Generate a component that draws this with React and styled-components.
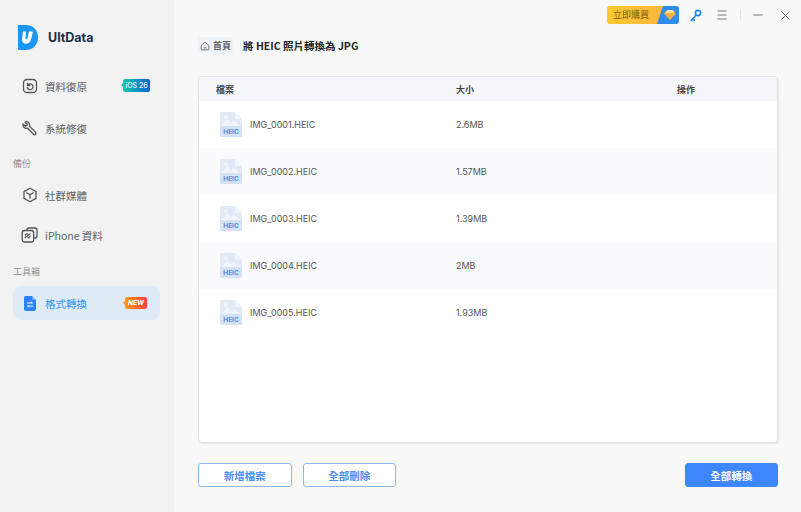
import React from "react";
import styled, { createGlobalStyle } from "styled-components";

const GlobalStyle = createGlobalStyle`
  html, body { margin: 0; padding: 0; background: #f8f8f8; }
  body { font-family: "Noto Sans CJK TC", "Noto Sans", sans-serif; }
`;

const Window = styled.div`
  width: 801px;
  height: 512px;
  display: flex;
  overflow: hidden;
`;

const Sidebar = styled.aside`
  width: 174px;
  flex: none;
  padding-top: 25px;
  box-sizing: border-box;
  background: #f2f2f2;
`;

const Brand = styled.div`
  height: 25px;
  margin: 0 0 19px 18px;
  display: flex;
  align-items: center;
  gap: 10px;
  font: 700 12.5px "Inter", sans-serif;
  color: #1f2d44;
`;

const NavItem = styled.div`
  position: relative;
  height: 34px;
  margin: 0 14px 0 13px;
  padding-left: 8px;
  display: flex;
  align-items: center;
  gap: 7px;
  border-radius: 8px;
  font-size: 10.5px;
  color: ${p => (p.$active ? "#2f95f5" : "#616161")};
  background: ${p => (p.$active ? "#deeaf6" : "transparent")};
  margin-bottom: ${p => p.$after || 0}px;
`;

const NavIcon = styled.span`
  width: 17px;
  height: 17px;
  display: flex;
  align-items: center;
  justify-content: center;
  flex: none;
`;

const SectionLabel = styled.div`
  margin: 0 0 7px 13px;
  height: 14px;
  line-height: 14px;
  font-size: 9px;
  color: #8f8f8f;
`;

const IosBadge = styled.span`
  position: absolute;
  left: 110px;
  top: 10px;
  width: 27px;
  height: 13px;
  border-radius: 2px;
  background: linear-gradient(90deg, #11c9a8, #0f62d8);
  color: #eaf6ff;
  font: 500 7px/13px "Inter", sans-serif;
  text-align: center;
  &::before {
    content: "";
    position: absolute;
    left: -2px;
    top: 4px;
    border: 2.5px solid transparent;
    border-left: 0;
    border-right: 2.5px solid #11c9a8;
  }
`;

const NewBadge = styled.span`
  position: absolute;
  left: 112px;
  top: 11px;
  width: 22px;
  height: 12px;
  border-radius: 2px;
  background: linear-gradient(90deg, #ff9a1f, #f8403e);
  color: #fff;
  font: italic 800 6.5px/12px "Inter", sans-serif;
  text-align: center;
  &::before {
    content: "";
    position: absolute;
    left: -2px;
    top: 3.5px;
    border: 2.5px solid transparent;
    border-left: 0;
    border-right: 2.5px solid #ff9a1f;
  }
`;

const Main = styled.main`
  flex: 1;
  display: flex;
  flex-direction: column;
  padding: 6px 23px 25px 24px;
  background: #f8f8f8;
  min-width: 0;
`;

const TopBar = styled.div`
  height: 18px;
  margin-right: -26px;
  display: flex;
  align-items: center;
  justify-content: flex-end;
`;

const BuyButton = styled.div`
  position: relative;
  width: 72px;
  height: 18px;
  margin-right: 9px;
  border-radius: 3px;
  overflow: hidden;
  background: linear-gradient(90deg, #fdc92f, #f8b040);
  color: #7a5a10;
  font-size: 9px;
  line-height: 18px;
  padding-left: 6px;
  box-sizing: border-box;
`;

const BuyTag = styled.span`
  position: absolute;
  right: 0;
  top: 0;
  width: 22px;
  height: 18px;
  background: #2f8df0;
  clip-path: polygon(6px 0, 100% 0, 100% 100%, 0 100%);
  display: flex;
  align-items: center;
  justify-content: center;
  padding-left: 3px;
  box-sizing: border-box;
`;

const WinIcons = styled.div`
  display: flex;
  align-items: center;
`;

const WinButton = styled.span`
  width: ${p => p.$w}px;
  display: flex;
  justify-content: center;
  align-items: center;
`;

const Divider = styled.span`
  width: 1px;
  height: 10px;
  background: #e3e3e3;
  margin-right: 9px;
`;

const Crumbs = styled.div`
  margin-top: 13px;
  height: 17px;
  display: flex;
  align-items: center;
`;

const HomeLink = styled.div`
  width: 35px;
  height: 17px;
  display: flex;
  align-items: center;
  justify-content: center;
  gap: 3px;
  background: #eef3fa;
  border-radius: 3px;
  font-size: 9px;
  font-weight: 700;
  color: #666;
`;

const Title = styled.h1`
  margin: 0 0 0 10px;
  font-size: 10.5px;
  font-weight: 700;
  color: #262626;
`;

const Table = styled.div`
  margin-top: 22px;
  flex: 1;
  min-height: 0;
  background: #fff;
  border: 1px solid #e2e3e6;
  border-radius: 4px;
  box-shadow: 1px 1px 1px #e6e6e6;
  overflow: hidden;
`;

const Row = styled.div`
  display: grid;
  grid-template-columns: 240px 221px 1fr;
  align-items: center;
  height: ${p => (p.$head ? 24 : 47)}px;
  padding-left: 17px;
  background: ${p => (p.$head ? "#f5f7fb" : p.$odd ? "#fafbfd" : "#fff")};
  font-size: 9px;
  font-weight: ${p => (p.$head ? 700 : 400)};
  color: ${p => (p.$head ? "#444" : "#555")};
`;

const NameCell = styled.div`
  display: flex;
  align-items: center;
  gap: 8px;
  margin-left: 4px;
  font-family: "Inter", sans-serif;
`;

const SizeCell = styled.div`
  font-family: "Inter", sans-serif;
`;

const Footer = styled.div`
  margin-top: 20px;
  display: flex;
  align-items: center;
  gap: 11px;
`;

const Button = styled.div`
  width: 93.5px;
  height: 24px;
  box-sizing: border-box;
  border-radius: 3px;
  display: flex;
  align-items: center;
  justify-content: center;
  font-size: 10.5px;
  font-weight: 700;
  color: ${p => (p.$primary ? "#fff" : "#4d8ff5")};
  background: ${p => (p.$primary ? "#3d86fb" : "#fff")};
  border: 1.5px solid ${p => (p.$primary ? "#3d86fb" : "#8fb8fa")};
  margin-left: ${p => (p.$push ? "auto" : 0)};
`;

const stroke = { fill: "none", stroke: "#555", strokeWidth: 1.3, strokeLinecap: "round", strokeLinejoin: "round" };

const Logo = () => (
  <svg width="20" height="25" viewBox="0 0 20 25">
    <path d="M0 0h8c7 0 12 5 12 12.500S15 25 8 25H0z" fill="#1b96f3" />
    <path d="M5 6.500h3L7.500 13c0 1.500 1.500 1.500 2 .2L11 6.500h4l-2 8c-.8 3-3 4.500-5.500 4.200C5 18.300 3.800 16.500 4 14z" fill="#fff" />
  </svg>
);

const RecoverIcon = () => (
  <svg width="16" height="16" viewBox="0 0 16 16" {...stroke}>
    <rect x="1.500" y="1.500" width="13" height="13" rx="3.500" />
    <path d="M5.500 5.200v2.300h2.300M5.600 7.300A2.900 2.900 0 1 1 5.300 9.500" />
  </svg>
);

const WrenchIcon = () => (
  <svg width="17" height="17" viewBox="0 0 17 17" {...stroke}>
    <path d="M2 4l2.500 2.300L6.300 4.500 4 2c2.300-.9 4.700.6 4.600 3.300 0 .4 0 .7-.1 1l6 5.800c.7.7.7 1.500.1 2.100-.6.600-1.500.6-2.100 0L6.600 8.200C3.900 8.900 1.300 6.800 2 4z" />
  </svg>
);

const BoxIcon = () => (
  <svg width="16" height="16" viewBox="0 0 16 16" {...stroke}>
    <path d="M8 1.200l6 3.400v6.800l-6 3.400-6-3.400V4.600z" />
    <path d="M4.800 5.800L8 7.800l3.200-2M8 7.800v3.400" />
  </svg>
);

const PhoneIcon = () => (
  <svg width="17" height="16" viewBox="0 0 17 16" {...stroke}>
    <path d="M6 3.500V3a2 2 0 0 1 2-2h6a2 2 0 0 1 2 2v6a2 2 0 0 1-2 2h-1" />
    <rect x="1.200" y="3.500" width="11.500" height="11.500" rx="2.500" />
    <path d="M4 10.500l5-3.500M4.500 8a1.500 1.500 0 0 1 2-1M9 9.500a1.500 1.500 0 0 1-2 1" />
  </svg>
);

const ConvertIcon = () => (
  <svg width="12" height="15" viewBox="0 0 12 15">
    <path d="M2 0h6l4 4v9a2 2 0 0 1-2 2H2a2 2 0 0 1-2-2V2a2 2 0 0 1 2-2z" fill="#2b83f6" />
    <path d="M8.500 0.500L11.500 3.500H8.500z" fill="#a9cdfb" />
    <path d="M3 7h5.500M7 5.800L8.500 7M9 10H3.500M5 11.200L3.500 10" stroke="#fff" strokeWidth="1" fill="none" />
  </svg>
);

const HomeIcon = () => (
  <svg width="10" height="10" viewBox="0 0 9 9" fill="none" stroke="#666" strokeWidth="0.8">
    <path d="M1 4l3.500-3L8 4v3.200c0 .5-.3.800-.8.800H1.800c-.5 0-.8-.3-.8-.8z" />
    <path d="M3 6.200h3" />
  </svg>
);

const Gem = () => (
  <svg width="12" height="10" viewBox="0 0 12 10">
    <path d="M3 0h6l3 3.500L6 10 0 3.500z" fill="#fbb13c" />
    <path d="M3 0h6l1 3H2z" fill="#ffe2a3" />
  </svg>
);

const KeyIcon = () => (
  <svg width="12" height="13" viewBox="0 0 12 13" fill="none" stroke="#1f8df0" strokeWidth="1.700" strokeLinecap="round">
    <circle cx="8" cy="4" r="2.600" />
    <path d="M6 6.200L1.300 11.500M2.800 9.800l1.400 1.200" />
  </svg>
);

const MenuIcon = () => (
  <svg width="10" height="10" viewBox="0 0 10 10" stroke="#777" strokeWidth="1">
    <path d="M0.500 1h9M0.500 5h9M0.500 9h9" />
  </svg>
);

const MinIcon = () => (
  <svg width="10" height="2" viewBox="0 0 10 2" stroke="#777" strokeWidth="1">
    <path d="M0.500 1h9" />
  </svg>
);

const CloseIcon = () => (
  <svg width="9" height="9" viewBox="0 0 9 9" stroke="#777" strokeWidth="1">
    <path d="M0.500 0.500l8 8M8.500 0.500l-8 8" />
  </svg>
);

const HeicIcon = () => (
  <svg width="22" height="25" viewBox="0 0 22 25">
    <path d="M2 0h13l7 7v16a2 2 0 0 1-2 2H2a2 2 0 0 1-2-2V2a2 2 0 0 1 2-2z" fill="#e2eaf6" />
    <path d="M15 0l7 7h-5a2 2 0 0 1-2-2z" fill="#f0f5fb" />
    <path d="M2 14l5-7 4 4 3-2 6 5z" fill="#f1f5fb" />
    <circle cx="6" cy="5" r="2" fill="#f1f5fb" />
    <rect x="0" y="14" width="22" height="11" rx="2" fill="#d3e2f6" />
    <text x="11" y="22" fontSize="6.500" fontWeight="700" textAnchor="middle" fill="#5a8ed6" fontFamily="Inter, sans-serif">HEIC</text>
  </svg>
);

const files = [
  { id: 1, name: "IMG_0001.HEIC", size: "2.6MB" },
  { id: 2, name: "IMG_0002.HEIC", size: "1.57MB" },
  { id: 3, name: "IMG_0003.HEIC", size: "1.39MB" },
  { id: 4, name: "IMG_0004.HEIC", size: "2MB" },
  { id: 5, name: "IMG_0005.HEIC", size: "1.93MB" },
];

export default function App() {
  return (
    <Window>
      <GlobalStyle />
      <Sidebar>
        <Brand>
          <Logo />
          UltData
        </Brand>
        <NavItem $after={8}>
          <NavIcon><RecoverIcon /></NavIcon>
          資料復原
          <IosBadge>iOS 26</IosBadge>
        </NavItem>
        <NavItem $after={12}>
          <NavIcon><WrenchIcon /></NavIcon>
          系統修復
        </NavItem>
        <SectionLabel>備份</SectionLabel>
        <NavItem $after={6}>
          <NavIcon><BoxIcon /></NavIcon>
          社群媒體
        </NavItem>
        <NavItem $after={13}>
          <NavIcon><PhoneIcon /></NavIcon>
          iPhone 資料
        </NavItem>
        <SectionLabel>工具箱</SectionLabel>
        <NavItem $active>
          <NavIcon><ConvertIcon /></NavIcon>
          格式轉換
          <NewBadge>NEW</NewBadge>
        </NavItem>
      </Sidebar>
      <Main>
        <TopBar>
          <BuyButton>
            立即購買
            <BuyTag><Gem /></BuyTag>
          </BuyButton>
          <WinIcons>
            <WinButton $w={16}><KeyIcon /></WinButton>
            <WinButton $w={36}><MenuIcon /></WinButton>
            <Divider />
            <WinButton $w={16}><MinIcon /></WinButton>
            <WinButton $w={38}><CloseIcon /></WinButton>
          </WinIcons>
        </TopBar>
        <Crumbs>
          <HomeLink><HomeIcon />首頁</HomeLink>
          <Title>將 HEIC 照片轉換為 JPG</Title>
        </Crumbs>
        <Table>
          <Row $head>
            <div>檔案</div>
            <div>大小</div>
            <div>操作</div>
          </Row>
          {files.map((item, i) => (
            <Row key={item.id} $odd={i % 2 === 1}>
              <NameCell><HeicIcon />{item.name}</NameCell>
              <SizeCell>{item.size}</SizeCell>
              <div />
            </Row>
          ))}
        </Table>
        <Footer>
          <Button>新增檔案</Button>
          <Button>全部刪除</Button>
          <Button $primary $push>全部轉換</Button>
        </Footer>
      </Main>
    </Window>
  );
}
